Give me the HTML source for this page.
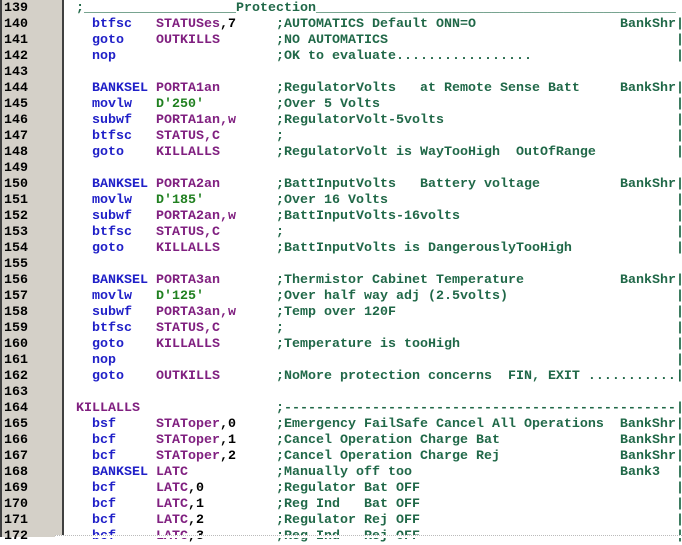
<!DOCTYPE html>
<html><head><style>
body{margin:0;width:682px;height:537px;overflow:hidden;background:#fff;position:relative;font-family:"Liberation Mono",monospace;font-weight:bold;font-size:13.33px}
#g{position:absolute;left:0;top:0;width:62px;height:537px;background:#d4d0c8;border-left:2px solid #404040;box-sizing:border-box}
#gl{position:absolute;left:62px;top:0;width:2px;height:537px;background:#404040}
#bot{position:absolute;left:55px;top:535px;width:627px;height:2px;background:#fff;border-top:1px dotted #bbb;z-index:2}
#w{position:absolute;left:0;top:1px;width:682px;height:537px}
.l{position:absolute;left:0;height:16px;line-height:16px;white-space:pre;width:682px}
.l span{position:absolute;top:0}
.n{left:4px;color:#000}
.i{left:92px;color:#2020c8}
.o{left:156px;color:#802080}
.c{left:276px;color:#206848}
.r{left:620px;color:#206848}
.b{left:676px;color:#206848}
.k{color:#000}
.d{color:#208020}
</style></head><body>
<div id="g"></div><div id="gl"></div>
<div id="w">
<div class="l" style="top:0"><span class="n">139</span><span class="c" style="left:76px">;___________________Protection_____________________________________________</span></div>
<div class="l" style="top:16px"><span class="n">140</span><span class="i">btfsc</span><span class="o">STATUSes<span class="k">,7</span></span><span class="c">;AUTOMATICS Default ONN=O</span><span class="r">BankShr</span><span class="b">|</span></div>
<div class="l" style="top:32px"><span class="n">141</span><span class="i">goto</span><span class="o">OUTKILLS</span><span class="c">;NO AUTOMATICS</span><span class="b">|</span></div>
<div class="l" style="top:48px"><span class="n">142</span><span class="i">nop</span><span class="c">;OK to evaluate.................</span><span class="b">|</span></div>
<div class="l" style="top:64px"><span class="n">143</span></div>
<div class="l" style="top:80px"><span class="n">144</span><span class="i">BANKSEL</span><span class="o">PORTA1an</span><span class="c">;RegulatorVolts   at Remote Sense Batt</span><span class="r">BankShr</span><span class="b">|</span></div>
<div class="l" style="top:96px"><span class="n">145</span><span class="i">movlw</span><span class="o d">D'250'</span><span class="c">;Over 5 Volts</span><span class="b">|</span></div>
<div class="l" style="top:112px"><span class="n">146</span><span class="i">subwf</span><span class="o">PORTA1an,w</span><span class="c">;RegulatorVolt-5volts</span><span class="b">|</span></div>
<div class="l" style="top:128px"><span class="n">147</span><span class="i">btfsc</span><span class="o">STATUS,C</span><span class="c">;</span><span class="b">|</span></div>
<div class="l" style="top:144px"><span class="n">148</span><span class="i">goto</span><span class="o">KILLALLS</span><span class="c">;RegulatorVolt is WayTooHigh  OutOfRange</span><span class="b">|</span></div>
<div class="l" style="top:160px"><span class="n">149</span></div>
<div class="l" style="top:176px"><span class="n">150</span><span class="i">BANKSEL</span><span class="o">PORTA2an</span><span class="c">;BattInputVolts   Battery voltage</span><span class="r">BankShr</span><span class="b">|</span></div>
<div class="l" style="top:192px"><span class="n">151</span><span class="i">movlw</span><span class="o d">D'185'</span><span class="c">;Over 16 Volts</span><span class="b">|</span></div>
<div class="l" style="top:208px"><span class="n">152</span><span class="i">subwf</span><span class="o">PORTA2an,w</span><span class="c">;BattInputVolts-16volts</span><span class="b">|</span></div>
<div class="l" style="top:224px"><span class="n">153</span><span class="i">btfsc</span><span class="o">STATUS,C</span><span class="c">;</span><span class="b">|</span></div>
<div class="l" style="top:240px"><span class="n">154</span><span class="i">goto</span><span class="o">KILLALLS</span><span class="c">;BattInputVolts is DangerouslyTooHigh</span><span class="b">|</span></div>
<div class="l" style="top:256px"><span class="n">155</span></div>
<div class="l" style="top:272px"><span class="n">156</span><span class="i">BANKSEL</span><span class="o">PORTA3an</span><span class="c">;Thermistor Cabinet Temperature</span><span class="r">BankShr</span><span class="b">|</span></div>
<div class="l" style="top:288px"><span class="n">157</span><span class="i">movlw</span><span class="o d">D'125'</span><span class="c">;Over half way adj (2.5volts)</span><span class="b">|</span></div>
<div class="l" style="top:304px"><span class="n">158</span><span class="i">subwf</span><span class="o">PORTA3an,w</span><span class="c">;Temp over 120F</span><span class="b">|</span></div>
<div class="l" style="top:320px"><span class="n">159</span><span class="i">btfsc</span><span class="o">STATUS,C</span><span class="c">;</span><span class="b">|</span></div>
<div class="l" style="top:336px"><span class="n">160</span><span class="i">goto</span><span class="o">KILLALLS</span><span class="c">;Temperature is tooHigh</span><span class="b">|</span></div>
<div class="l" style="top:352px"><span class="n">161</span><span class="i">nop</span><span class="b">|</span></div>
<div class="l" style="top:368px"><span class="n">162</span><span class="i">goto</span><span class="o">OUTKILLS</span><span class="c">;NoMore protection concerns  FIN, EXIT ...........|</span></div>
<div class="l" style="top:384px"><span class="n">163</span></div>
<div class="l" style="top:400px"><span class="n">164</span><span class="o" style="left:76px">KILLALLS</span><span class="c">;-------------------------------------------------</span><span class="b">|</span></div>
<div class="l" style="top:416px"><span class="n">165</span><span class="i">bsf</span><span class="o">STAToper<span class="k">,0</span></span><span class="c">;Emergency FailSafe Cancel All Operations  BankShr|</span></div>
<div class="l" style="top:432px"><span class="n">166</span><span class="i">bcf</span><span class="o">STAToper<span class="k">,1</span></span><span class="c">;Cancel Operation Charge Bat</span><span class="r">BankShr</span><span class="b">|</span></div>
<div class="l" style="top:448px"><span class="n">167</span><span class="i">bcf</span><span class="o">STAToper<span class="k">,2</span></span><span class="c">;Cancel Operation Charge Rej</span><span class="r">BankShr</span><span class="b">|</span></div>
<div class="l" style="top:464px"><span class="n">168</span><span class="i">BANKSEL</span><span class="o">LATC</span><span class="c">;Manually off too</span><span class="r">Bank3</span><span class="b">|</span></div>
<div class="l" style="top:480px"><span class="n">169</span><span class="i">bcf</span><span class="o">LATC<span class="k">,0</span></span><span class="c">;Regulator Bat OFF</span><span class="b">|</span></div>
<div class="l" style="top:496px"><span class="n">170</span><span class="i">bcf</span><span class="o">LATC<span class="k">,1</span></span><span class="c">;Reg Ind   Bat OFF</span><span class="b">|</span></div>
<div class="l" style="top:512px"><span class="n">171</span><span class="i">bcf</span><span class="o">LATC<span class="k">,2</span></span><span class="c">;Regulator Rej OFF</span><span class="b">|</span></div>
<div class="l" style="top:528px"><span class="n">172</span><span class="i">bcf</span><span class="o">LATC<span class="k">,3</span></span><span class="c">;Reg Ind   Rej OFF</span><span class="b">|</span></div>
</div>
<div id="bot"></div>
</body></html>
